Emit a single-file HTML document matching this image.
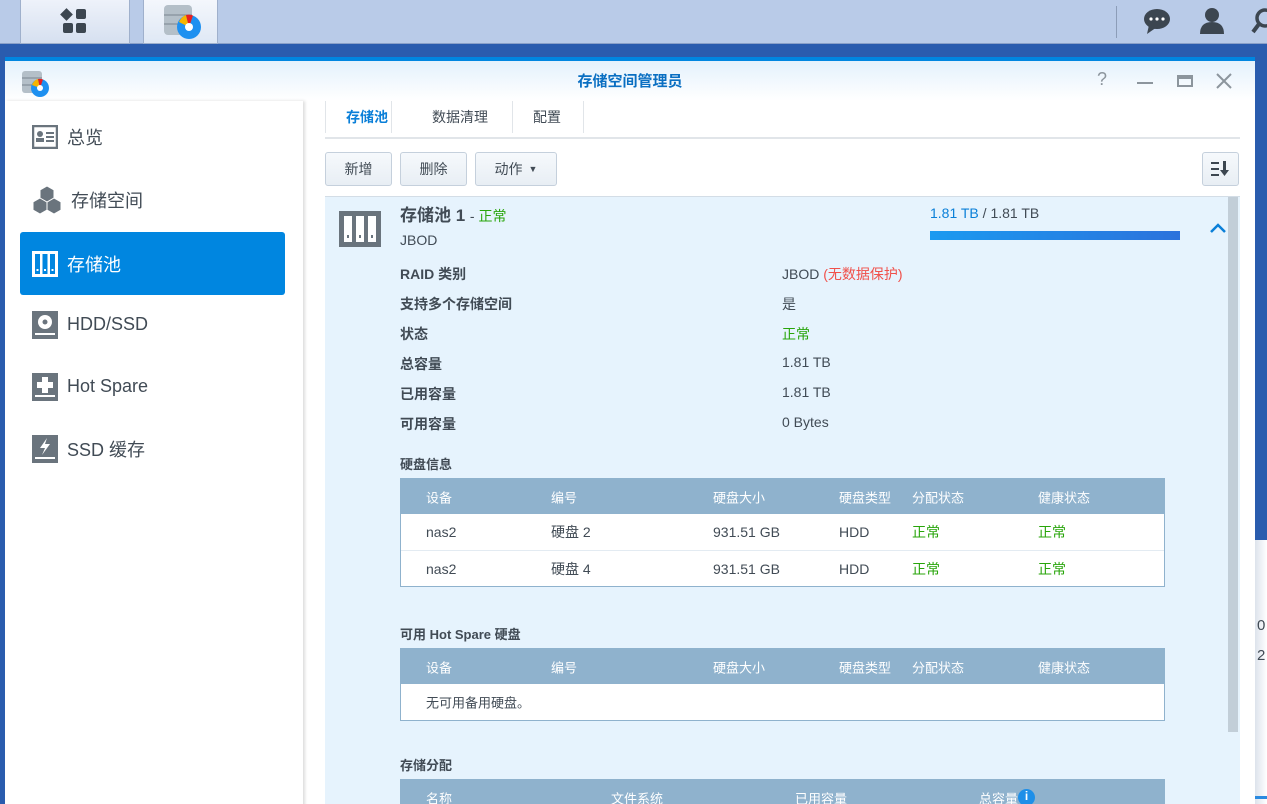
<!DOCTYPE html>
<html style="width:1267px;height:804px;overflow:hidden"><head><meta charset="utf-8"><style>
*{box-sizing:border-box;margin:0;padding:0}
body{width:1267px;height:804px;overflow:hidden;position:relative;background:#2a5cae;font-family:"Liberation Sans","Noto Sans CJK SC",sans-serif;color:#414b55;font-size:14px}
.abs{position:absolute}
.task{left:0;top:0;width:1267px;height:44px;background:#b9cbe8;border-bottom:1px solid #8aa0c8}
.tb{top:0;height:44px;background:linear-gradient(#eef2fa,#d6e0f0);border:1px solid #9fb0cc;border-top:none}
.win{left:5px;top:57px;width:1250px;height:747px;background:#fff;border-top:4px solid #0086e0;overflow:hidden}
.hdr{left:0;top:0;width:1250px;height:40px;background:linear-gradient(#e4f1fc,#fff)}
.side{left:0;top:40px;width:298px;height:720px;background:#fff;box-shadow:2px 0 3px #ddd}
.nav{position:absolute;left:15px;width:265px;height:63px;display:flex;align-items:center;padding-left:12px;font-size:18px;color:#414b55}
.nav svg{margin-right:9px}
.nav.sel{background:#0086e0;color:#fff;border-radius:3px}
.btn{position:absolute;top:91px;height:34px;border:1px solid #c5d0dc;border-radius:3px;background:linear-gradient(#f6f9fc,#e8eef4);font-size:14px;color:#414b55;display:flex;align-items:center;justify-content:center}
.panel{left:320px;top:135px;width:915px;height:640px;background:#e6f3fd;border-top:1px solid #d3dde6}
.lbl{position:absolute;left:75px;font-size:14px;font-weight:bold;color:#414b55}
.val{position:absolute;left:457px;font-size:14px;color:#414b55}
.tbl{position:absolute;left:75px;width:765px;border:1px solid #8fb2cd;background:#fff}
.th{height:35px;background:#8fb2cd;color:#fff;font-size:13px;position:relative}
.tr{height:36px;position:relative;border-top:1px solid #e3ebf2;font-size:14px}
.th span,.tr span{position:absolute;top:50%;transform:translateY(-50%)}
.g{color:#28a50a}
</style></head><body>
<div class="abs task"></div>
<div class="abs tb" style="left:20px;width:110px"></div>
<svg class="abs" style="left:60px;top:8px" width="30" height="28"><rect x="2" y="2" width="9" height="9" transform="rotate(45 6.5 6.5)" fill="#3c4650"/><rect x="16" y="1" width="10" height="10" rx="2" fill="#3c4650"/><rect x="3" y="15" width="10" height="10" rx="2" fill="#3c4650"/><rect x="16" y="15" width="10" height="10" rx="2" fill="#3c4650"/></svg>
<div class="abs tb" style="left:143px;width:75px;background:linear-gradient(#f4f7fc,#dfe8f5)"></div>
<svg class="abs" style="left:162px;top:2px" width="40" height="40"><rect x="2" y="3" width="28" height="30" rx="4" fill="#b4bfc8"/><line x1="2" y1="13" x2="30" y2="13" stroke="#7a8690"/><line x1="2" y1="22" x2="30" y2="22" stroke="#7a8690"/><circle cx="27" cy="25" r="12" fill="#1e90f0"/><path d="M27 25 L17 20 A12 12 0 0 1 24 13Z" fill="#f7b500"/><path d="M27 25 L24 13 A12 12 0 0 1 31 13.5Z" fill="#e82020"/><circle cx="27" cy="25" r="4" fill="#fff"/></svg>
<div class="abs" style="left:1116px;top:6px;width:1px;height:32px;background:#8c9db8"></div>
<svg class="abs" style="left:1143px;top:6px" width="30" height="30"><ellipse cx="14" cy="13" rx="13" ry="10" fill="#3c4650"/><path d="M6 19 L4 28 L14 21Z" fill="#3c4650"/><circle cx="8" cy="13" r="1.6" fill="#fff"/><circle cx="14" cy="13" r="1.6" fill="#fff"/><circle cx="20" cy="13" r="1.6" fill="#fff"/></svg>
<svg class="abs" style="left:1197px;top:6px" width="30" height="30"><circle cx="15" cy="9" r="7" fill="#3c4650"/><path d="M3 28 Q3 16 15 16 Q27 16 27 28Z" fill="#3c4650"/></svg>
<svg class="abs" style="left:1250px;top:6px" width="17" height="30"><circle cx="15" cy="12" r="8" stroke="#3c4650" stroke-width="3.5" fill="none"/><line x1="9" y1="18" x2="3" y2="26" stroke="#3c4650" stroke-width="4"/></svg>
<div class="abs" style="left:1255px;top:540px;width:12px;height:264px;background:linear-gradient(90deg,#dde3ec,#fff)"></div>
<div class="abs" style="left:1257px;top:617px;font-size:15px;color:#414b55">0</div>
<div class="abs" style="left:1257px;top:647px;font-size:15px;color:#414b55">2</div>
<div class="abs" style="left:1255px;top:796px;width:12px;height:3px;background:#2a8ae0"></div>

<div class="abs win">
<div class="abs hdr"></div>
<svg class="abs" style="left:15px;top:8px" width="30" height="30"><rect x="2" y="2" width="20" height="22" rx="3" fill="#b4bfc8"/><line x1="2" y1="9" x2="22" y2="9" stroke="#7a8690"/><line x1="2" y1="16" x2="22" y2="16" stroke="#7a8690"/><circle cx="20" cy="19" r="9" fill="#1e90f0"/><path d="M20 19 L12 16 A9 9 0 0 1 18 10Z" fill="#f7b500"/><path d="M20 19 L18 10 A9 9 0 0 1 23 10.5Z" fill="#e82020"/><circle cx="20" cy="19" r="3" fill="#fff"/></svg>
<div class="abs" style="left:0;width:1250px;top:9px;text-align:center;font-size:15px;font-weight:bold;color:#0a6fc2">存储空间管理员</div>
<div class="abs" style="left:1092px;top:8px;font-size:18px;color:#8c959d">?</div>
<div class="abs" style="left:1132px;top:21px;width:16px;height:2px;background:#8c959d"></div>
<div class="abs" style="left:1172px;top:14px;width:16px;height:12px;border:2px solid #8c959d;border-top-width:4px"></div>
<svg class="abs" style="left:1211px;top:12px" width="16" height="16"><path d="M1 1L15 15M15 1L1 15" stroke="#8c959d" stroke-width="2"/></svg>

<div class="abs side">
<div class="nav" style="top:4px"><svg width="26" height="24"><rect x="1" y="1" width="24" height="22" fill="none" stroke="#6a747d" stroke-width="2.5"/><circle cx="8" cy="9" r="3" fill="#6a747d"/><rect x="4" y="13" width="8" height="4" fill="#6a747d"/><rect x="14" y="7" width="8" height="2" fill="#6a747d"/><rect x="14" y="11" width="8" height="2" fill="#6a747d"/><rect x="14" y="15" width="8" height="2" fill="#6a747d"/></svg>总览</div>
<div class="nav" style="top:67px"><svg width="30" height="30"><path d="M15 1 L22 5 L22 13 L15 17 L8 13 L8 5Z M8 13 L15 17 L15 25 L8 29 L1 25 L1 17Z M22 13 L29 17 L29 25 L22 29 L15 25 L15 17Z" fill="#6a747d" stroke="#fff" stroke-width="1"/></svg>存储空间</div>
<div class="nav sel" style="top:131px"><svg width="26" height="26"><rect x="0" y="0" width="26" height="26" fill="#fff"/><rect x="3" y="3" width="5" height="20" fill="#0086e0"/><rect x="10.5" y="3" width="5" height="20" fill="#0086e0"/><rect x="18" y="3" width="5" height="20" fill="#0086e0"/><rect x="4.5" y="18" width="2" height="2" fill="#fff"/><rect x="12" y="18" width="2" height="2" fill="#fff"/><rect x="19.5" y="18" width="2" height="2" fill="#fff"/></svg>存储池</div>
<div class="nav" style="top:192px"><svg width="26" height="28"><rect x="0" y="0" width="26" height="28" fill="#6a747d"/><circle cx="13" cy="11" r="7" fill="#fff"/><circle cx="13" cy="11" r="2.5" fill="#6a747d"/><rect x="3" y="22" width="20" height="2" fill="#fff"/></svg>HDD/SSD</div>
<div class="nav" style="top:254px"><svg width="26" height="28"><rect x="0" y="0" width="26" height="28" fill="#6a747d"/><path d="M10 4h6v5h5v6h-5v5h-6v-5h-5v-6h5z" fill="#fff"/><rect x="3" y="22" width="20" height="2" fill="#fff"/></svg>Hot Spare</div>
<div class="nav" style="top:316px"><svg width="26" height="28"><rect x="0" y="0" width="26" height="28" fill="#6a747d"/><path d="M15 3 L8 13 L13 13 L10 20 L18 9 L13 9Z" fill="#fff"/><rect x="3" y="22" width="20" height="2" fill="#fff"/></svg>SSD 缓存</div>
</div>

<div class="abs" style="left:320px;top:40px;width:915px;height:38px;border-bottom:2px solid #e1e5e9"></div>
<div class="abs" style="left:320px;top:40px;width:1px;height:32px;background:#e1e5e9"></div>
<div class="abs" style="left:341px;top:46px;font-size:14px;font-weight:bold;color:#0a7fd8">存储池</div>
<div class="abs" style="left:386px;top:40px;width:1px;height:32px;background:#e1e5e9"></div>
<div class="abs" style="left:427px;top:46px;font-size:14px">数据清理</div>
<div class="abs" style="left:507px;top:40px;width:1px;height:32px;background:#e1e5e9"></div>
<div class="abs" style="left:528px;top:46px;font-size:14px">配置</div>
<div class="abs" style="left:578px;top:40px;width:1px;height:32px;background:#e1e5e9"></div>

<div class="btn" style="left:320px;width:67px">新增</div>
<div class="btn" style="left:395px;width:67px">删除</div>
<div class="btn" style="left:470px;width:82px">动作 <span style="font-size:9px;margin-left:6px">▼</span></div>
<div class="btn" style="left:1197px;width:37px"><svg width="22" height="18"><rect x="1" y="2" width="8" height="2" fill="#3c4650"/><rect x="1" y="8" width="8" height="2" fill="#3c4650"/><rect x="1" y="14" width="8" height="2" fill="#3c4650"/><rect x="13" y="1" width="3" height="10" fill="#3c4650"/><path d="M10 10h9l-4.5 6z" fill="#3c4650"/></svg></div>

<div class="abs panel">
<svg class="abs" style="left:14px;top:14px" width="42" height="36"><rect width="42" height="36" fill="#6a747d"/><rect x="5" y="5" width="8" height="26" fill="#fff"/><rect x="17" y="5" width="8" height="26" fill="#fff"/><rect x="29" y="5" width="8" height="26" fill="#fff"/><rect x="8" y="24" width="2" height="3" fill="#6a747d"/><rect x="20" y="24" width="2" height="3" fill="#6a747d"/><rect x="32" y="24" width="2" height="3" fill="#6a747d"/></svg>
<div class="abs" style="left:75px;top:4px;font-size:17px;font-weight:bold">存储池 1 <span style="font-weight:normal;font-size:14px">- <span class="g">正常</span></span></div>
<div class="abs" style="left:75px;top:35px;font-size:14px">JBOD</div>
<div class="abs" style="left:605px;top:8px;font-size:14px"><span style="color:#0a7fd8">1.81 TB</span> / 1.81 TB</div>
<div class="abs" style="left:605px;top:34px;width:250px;height:9px;background:linear-gradient(90deg,#1b9af0,#2c72dc)"></div>
<svg class="abs" style="left:884px;top:25px" width="18" height="12"><path d="M2 10L9 3L16 10" stroke="#0a7fd8" stroke-width="2.5" fill="none"/></svg>
<div class="abs" style="left:903px;top:0;width:10px;height:535px;background:#c2ced8"></div>
<div class="lbl" style="top:67px">RAID 类别</div><div class="val" style="top:67px">JBOD <span style="color:#f0504a">(无数据保护)</span></div>
<div class="lbl" style="top:97px">支持多个存储空间</div><div class="val" style="top:97px">是</div>
<div class="lbl" style="top:127px">状态</div><div class="val g" style="top:127px">正常</div>
<div class="lbl" style="top:157px">总容量</div><div class="val" style="top:157px">1.81 TB</div>
<div class="lbl" style="top:187px">已用容量</div><div class="val" style="top:187px">1.81 TB</div>
<div class="lbl" style="top:217px">可用容量</div><div class="val" style="top:217px">0 Bytes</div>
<div class="lbl" style="top:257px;font-size:13px">硬盘信息</div>
<div class="tbl" style="top:281px">
<div class="th"><span style="left:25px">设备</span><span style="left:150px">编号</span><span style="left:312px">硬盘大小</span><span style="left:438px">硬盘类型</span><span style="left:511px">分配状态</span><span style="left:637px">健康状态</span></div>
<div class="tr" style="border-top:none"><span style="left:25px">nas2</span><span style="left:150px">硬盘 2</span><span style="left:312px">931.51 GB</span><span style="left:438px">HDD</span><span class="g" style="left:511px">正常</span><span class="g" style="left:637px">正常</span></div>
<div class="tr"><span style="left:25px">nas2</span><span style="left:150px">硬盘 4</span><span style="left:312px">931.51 GB</span><span style="left:438px">HDD</span><span class="g" style="left:511px">正常</span><span class="g" style="left:637px">正常</span></div>
</div>
<div class="lbl" style="top:427px;font-size:13px">可用 Hot Spare 硬盘</div>
<div class="tbl" style="top:451px">
<div class="th"><span style="left:25px">设备</span><span style="left:150px">编号</span><span style="left:312px">硬盘大小</span><span style="left:438px">硬盘类型</span><span style="left:511px">分配状态</span><span style="left:637px">健康状态</span></div>
<div class="tr" style="border-top:none;font-size:13px"><span style="left:25px">无可用备用硬盘。</span></div>
</div>
<div class="lbl" style="top:558px;font-size:13px">存储分配</div>
<div class="tbl" style="top:582px">
<div class="th"><span style="left:25px">名称</span><span style="left:210px">文件系统</span><span style="left:394px">已用容量</span><span style="left:578px">总容量 <span style="display:inline-block;width:17px;height:17px;border-radius:50%;background:#1e8fe8;color:#fff;text-align:center;font-size:12px;font-weight:bold">i</span></span></div>
</div>
</div>
</div>
</body></html>
